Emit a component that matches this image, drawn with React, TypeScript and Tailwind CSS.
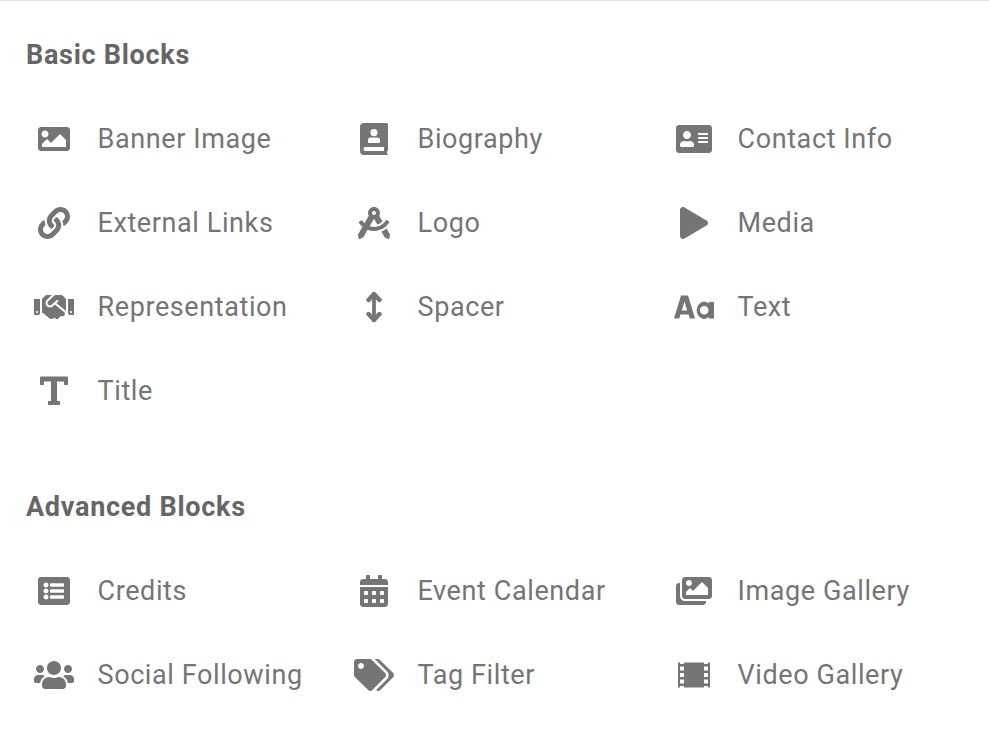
import type { ReactNode } from "react";
import {
  FaAddressCard,
  FaCalendarAlt,
  FaDraftingCompass,
  FaHandshake,
  FaImage,
  FaImages,
  FaLink,
  FaListAlt,
  FaPlay,
  FaTags,
  FaUsers,
} from "react-icons/fa";

function BookUserIcon() {
  return (
    <svg width="28" height="32" viewBox="0 0 28 32" fill="currentColor">
      <path
        fillRule="evenodd"
        d="M4 0H26.5A1.5 1.5 0 0 1 28 1.5V27a1.5 1.5 0 0 1-1 1.4V30.6A1.4 1.4 0 0 1 28 32H4A4 4 0 0 1 0 28V4A4 4 0 0 1 4 0ZM14 6a3.6 3.6 0 1 0 0 7.2A3.6 3.6 0 0 0 14 6ZM10.5 14.5A2.5 2.5 0 0 0 8 17v2.2c0 .5.4.8.8.8H19.2c.4 0 .8-.3.8-.8V17a2.500 2.500 0 0 0-2.500-2.500ZM5.500 24a2 2 0 0 0 0 4H24V24Z"
      />
    </svg>
  );
}

function LettersIcon() {
  return (
    <svg width="40" height="32" viewBox="0 0 40 32" fill="currentColor">
      <path d="M7 4.500H14L21 27.500H15.700L14.600 23.500H6.400L5.300 27.500H0ZM10.500 10.500L7.800 19.500H13.200Z" fillRule="evenodd" />
      <path
        fillRule="evenodd"
        d="M29.500 10.500A9 9 0 0 0 29.500 28C31.500 28 33 27.300 34.800 26V27.500H40V11H34.800V12.500C33 11.200 31.500 10.500 29.500 10.500ZM30.200 15A4.300 4.300 0 1 1 30.200 23.600A4.300 4.300 0 0 1 30.200 15Z"
      />
    </svg>
  );
}

function SerifTIcon() {
  return (
    <svg width="28" height="32" viewBox="0 0 28 32" fill="currentColor">
      <path d="M1 1.500H27A1 1 0 0 1 28 2.500V9.500A.5.500 0 0 1 27.500 10H24.500A.5.500 0 0 1 24 9.500V6.500H17V26H19.500A.5.500 0 0 1 20 26.500V29.500A.5.500 0 0 1 19.500 30H8.500A.5.500 0 0 1 8 29.500V26.500A.5.500 0 0 1 8.500 26H11V6.500H4V9.500A.5.500 0 0 1 3.500 10H.5A.5.500 0 0 1 0 9.500V2.500A1 1 0 0 1 1 1.500Z" />
    </svg>
  );
}

function FilmIcon() {
  return (
    <svg width="32" height="32" viewBox="0 0 32 32" fill="currentColor">
      <path
        fillRule="evenodd"
        d="M0 3.500H2V5H6V3.500H26V5H30V3.500H32V28.500H30V27H26V28.500H6V27H2V28.500H0ZM2 7.500V11.500H6V7.500ZM2 14V18H6V14ZM2 20.500V24.500H6V20.500ZM26 7.500V11.500H30V7.500ZM26 14V18H30V14ZM26 20.500V24.500H30V20.500Z"
      />
    </svg>
  );
}

function UpDownIcon() {
  return (
    <svg width="16" height="32" viewBox="0 0 16 32" fill="none" stroke="currentColor" strokeLinecap="round" strokeLinejoin="round">
      <path d="M8 3V29" strokeWidth="3.8" />
      <path d="M2.500 9L8 3L13.500 9M2.500 23L8 29L13.500 23" strokeWidth="4.4" />
    </svg>
  );
}

type Block = { name: string; icon: ReactNode };

const basicBlocks: Block[] = [
  { name: "Banner Image", icon: <FaImage className="h-8 w-8" /> },
  { name: "Biography", icon: <BookUserIcon /> },
  { name: "Contact Info", icon: <FaAddressCard className="h-8 w-9" /> },
  { name: "External Links", icon: <FaLink className="h-8 w-8" /> },
  { name: "Logo", icon: <FaDraftingCompass className="h-8 w-8" /> },
  { name: "Media", icon: <FaPlay className="h-8 w-7" /> },
  { name: "Representation", icon: <FaHandshake className="h-8 w-10" /> },
  { name: "Spacer", icon: <UpDownIcon /> },
  { name: "Text", icon: <LettersIcon /> },
  { name: "Title", icon: <SerifTIcon /> },
];

const advancedBlocks: Block[] = [
  { name: "Credits", icon: <FaListAlt className="h-8 w-8" /> },
  { name: "Event Calendar", icon: <FaCalendarAlt className="h-8 w-7" /> },
  { name: "Image Gallery", icon: <FaImages className="h-8 w-9" /> },
  { name: "Social Following", icon: <FaUsers className="h-8 w-10" /> },
  { name: "Tag Filter", icon: <FaTags className="h-8 w-10" /> },
  { name: "Video Gallery", icon: <FilmIcon /> },
];

function BlockGrid({ blocks }: { blocks: Block[] }) {
  return (
    <div className="grid grid-cols-[320px_320px_1fr] pl-2">
      {blocks.map((block) => (
        <div key={block.name} className="flex h-[84px] items-center gap-[23.5px]">
          <span className="flex w-10 shrink-0 items-center justify-center text-[#757575]">{block.icon}</span>
          <span className="text-[27px] leading-8 tracking-[0.6px] text-[#757575]">{block.name}</span>
        </div>
      ))}
    </div>
  );
}

export default function App() {
  return (
    <div className="min-h-[734px] border-t border-[#e5e5e5] bg-white px-[26px] pt-[38px] font-['Roboto',sans-serif]">
      <h2 className="mb-[26px] text-[27px] leading-8 font-bold tracking-[0.72px] text-[#666666]">Basic Blocks</h2>
      <BlockGrid blocks={basicBlocks} />
      <h2 className="mt-[58px] mb-[26px] text-[27px] leading-8 font-bold tracking-[0.72px] text-[#666666]">Advanced Blocks</h2>
      <BlockGrid blocks={advancedBlocks} />
    </div>
  );
}
